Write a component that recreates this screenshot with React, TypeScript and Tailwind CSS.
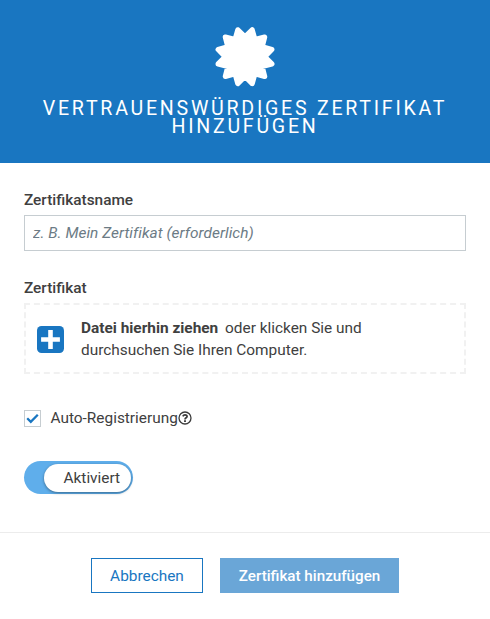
import React from "react";

const sealPoints = Array.from({ length: 24 }, (_, i) => {
  const angle = ((i + 1) * 15 * Math.PI) / 180;
  const r = i % 2 === 0 ? 27.8 : 19.8;
  return `${(30 + r * Math.cos(angle)).toFixed(2)},${(30.7 + r * Math.sin(angle)).toFixed(2)}`;
}).join(" ");

function Seal() {
  return (
    <svg width="60" height="61" viewBox="0 0 60 61" className="block">
      <polygon points={sealPoints} fill="#fff" stroke="#fff" strokeWidth="5.2" strokeLinejoin="round" />
    </svg>
  );
}

function PlusSquare() {
  return (
    <svg width="27" height="27" viewBox="0 0 27 27" className="mt-px block shrink-0">
      <rect width="27" height="27" rx="4.5" fill="#1976c1" />
      <path d="M13.5 6.4v14.2M6.4 13.5h14.2" stroke="#fff" strokeWidth="4.6" strokeLinecap="square" fill="none" />
    </svg>
  );
}

function QuestionCircle() {
  return (
    <svg width="14" height="14" viewBox="0 0 14 14" fill="none" stroke="#3b3b3b" className="block shrink-0">
      <circle cx="7" cy="7" r="6" strokeWidth="1.3" />
      <path d="M4.8 5.4C5.3 4.3 6 3.8 7 3.8c1.2 0 2.1.7 2.1 1.7C9.1 6.8 7 6.8 7 8.4" strokeWidth="1.7" />
      <path d="M7 9.2v1.8" strokeWidth="1.9" />
    </svg>
  );
}

export default function App() {
  return (
    <div className="h-[619px] w-[490px] overflow-hidden bg-white font-['Roboto',sans-serif] text-[15.4px] text-[#404040]">
      <header className="flex h-[163px] flex-col items-center bg-[#1976c1] pt-[26px]">
        <Seal />
        <h1 className="mt-[13px] text-center text-[19.6px] leading-[18px] font-normal tracking-[2.74px] text-white uppercase">
          Vertrauenswürdiges Zertifikat
          <br />
          hinzufügen
        </h1>
      </header>
      <main className="px-6 pt-[26px]">
        <label className="block h-[26px] leading-[22px] font-medium">Zertifikatsname</label>
        <input
          className="block h-9 w-full border border-[#c6cdd1] px-2 tracking-[0.04px] italic outline-none placeholder:text-[#6c7b85] placeholder:opacity-100"
          placeholder="z. B. Mein Zertifikat (erforderlich)"
        />
        <div className="mt-[26px] h-[26px] leading-[22px] font-medium">Zertifikat</div>
        <div className="flex h-[71px] items-center border-2 border-dashed border-[#f1f1f1] pl-[11px]">
          <PlusSquare />
          <p className="ml-[17px] w-[300px] leading-[22px]">
            <b className="mr-[3px] font-bold">Datei hierhin ziehen</b> oder klicken Sie und durchsuchen Sie Ihren Computer.
          </p>
        </div>
        <div className="mt-[33px] flex h-[22px] items-center">
          <span className="flex size-[17px] items-center justify-center border border-[#c6cdd1]">
            <svg width="13" height="11" viewBox="0 0 13 11">
              <path d="M1.2 5.2 4.8 8.8 11.8 1.8" fill="none" stroke="#1976c1" strokeWidth="2.3" />
            </svg>
          </span>
          <span className="ml-[9.5px] leading-[22px]">Auto-Registrierung</span>
          <QuestionCircle />
        </div>
        <div className="mt-8 flex h-[33px] w-[109px] items-center justify-end rounded-full bg-[#5faeeb] pr-[2px]">
          <span className="flex h-7 w-[87px] items-center rounded-full bg-white pt-[2px] pl-[19.5px] shadow-[0_1px_3px_rgba(0,0,0,0.4)]">Aktiviert</span>
        </div>
      </main>
      <footer className="mt-[38px] flex justify-center gap-[17px] border-t border-[#ececec] pt-[25px]">
        <button className="h-[35px] w-[112px] border border-[#1976c1] pt-[2px] text-[#1976c1]">Abbrechen</button>
        <button className="h-[35px] w-[179px] bg-[#6aa6d7] pt-[2px] text-[15.2px] font-medium text-white">Zertifikat hinzufügen</button>
      </footer>
    </div>
  );
}
